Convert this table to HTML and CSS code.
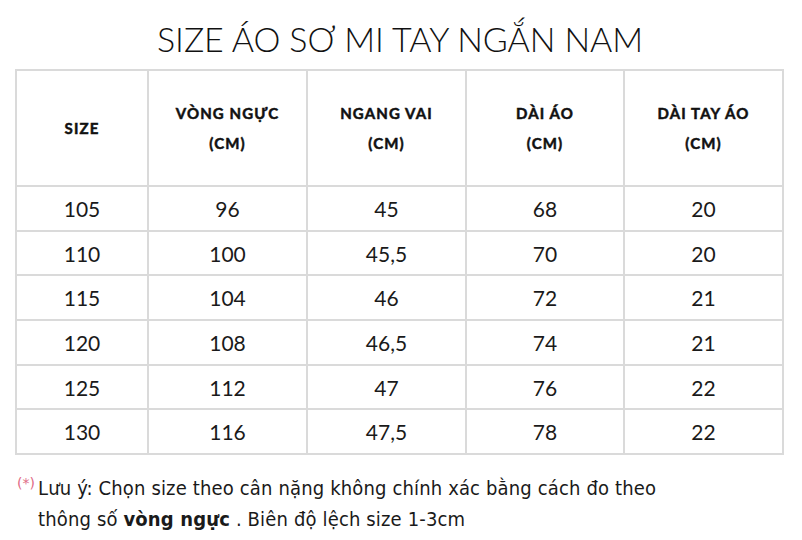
FILE: index.html
```html
<!DOCTYPE html>
<html lang="vi">
<head>
<meta charset="utf-8">
<link rel="stylesheet" href="styles.css">
</head>
<body>
<div class="page">
  <h1 class="title">SIZE ÁO SƠ MI TAY NGẮN NAM</h1>
  <table class="size-table">
    <colgroup>
      <col class="c1"><col class="c2"><col class="c3"><col class="c4"><col class="c5">
    </colgroup>
    <thead>
      <tr>
        <th>SIZE</th>
        <th>VÒNG NGỰC<br>(CM)</th>
        <th>NGANG VAI<br>(CM)</th>
        <th>DÀI ÁO<br>(CM)</th>
        <th>DÀI TAY ÁO<br>(CM)</th>
      </tr>
    </thead>
    <tbody>
      <tr><td>105</td><td>96</td><td>45</td><td>68</td><td>20</td></tr>
      <tr><td>110</td><td>100</td><td>45,5</td><td>70</td><td>20</td></tr>
      <tr><td>115</td><td>104</td><td>46</td><td>72</td><td>21</td></tr>
      <tr><td>120</td><td>108</td><td>46,5</td><td>74</td><td>21</td></tr>
      <tr><td>125</td><td>112</td><td>47</td><td>76</td><td>22</td></tr>
      <tr><td>130</td><td>116</td><td>47,5</td><td>78</td><td>22</td></tr>
    </tbody>
  </table>
  <div class="note">
    <span class="mark">(*)</span>
    <p class="note-text">Lưu ý: Chọn size theo cân nặng không chính xác bằng cách đo theo<br>thông số <b>vòng ngực</b> . Biên độ lệch size 1-3cm</p>
  </div>
</div>
</body>
</html>
```
FILE: styles.css
```css
* { box-sizing: border-box; }
html, body { margin: 0; padding: 0; background: #fff; }
body { width: 802px; height: 540px; overflow: hidden; color: #111; }
.page { padding: 0 0 0 15px; }
.title {
  margin: 0;
  height: 69px;
  padding-top: 19px;
  width: 770px;
  text-align: center;
  font-family: Lato, "DejaVu Sans", sans-serif;
  font-weight: 300;
  font-size: 34px;
  line-height: 40px;
  letter-spacing: -0.1px;
  color: #111;
}
.size-table {
  border-collapse: collapse;
  width: 769px;
  table-layout: fixed;
}
.c1 { width: 132px; }
.c2 { width: 159px; }
.c3 { width: 159px; }
.c4 { width: 158px; }
.c5 { width: 159px; }
.size-table th, .size-table td {
  border: 2px solid #dadada;
  text-align: center;
  padding: 0;
}
.size-table th {
  height: 116px;
  font-family: Lato, "DejaVu Sans", sans-serif;
  font-weight: 700;
  font-size: 15px;
  line-height: 30px;
  letter-spacing: 1.1px;
  -webkit-text-stroke: 0.5px #111;
  color: #111;
}
.size-table td {
  height: 44.7px;
  font-family: Lato, "DejaVu Sans", sans-serif;
  font-weight: 400;
  font-size: 21px;
  color: #1a1a1a;
}
.note {
  display: flex;
  align-items: flex-start;
  margin-top: 18px;
  padding-left: 2px;
}
.mark {
  font-family: "DejaVu Sans", sans-serif;
  color: #e06a86;
  font-size: 14px;
  line-height: 16px;
  margin-top: 2px;
  width: 21px;
}
.note-text {
  margin: 0;
  font-family: "DejaVu Sans Condensed", "DejaVu Sans", sans-serif;
  font-stretch: condensed;
  font-size: 20px;
  line-height: 31px;
  letter-spacing: 0.15px;
  color: #1a1a1a;
}
.note-text b { font-weight: 700; }
```
